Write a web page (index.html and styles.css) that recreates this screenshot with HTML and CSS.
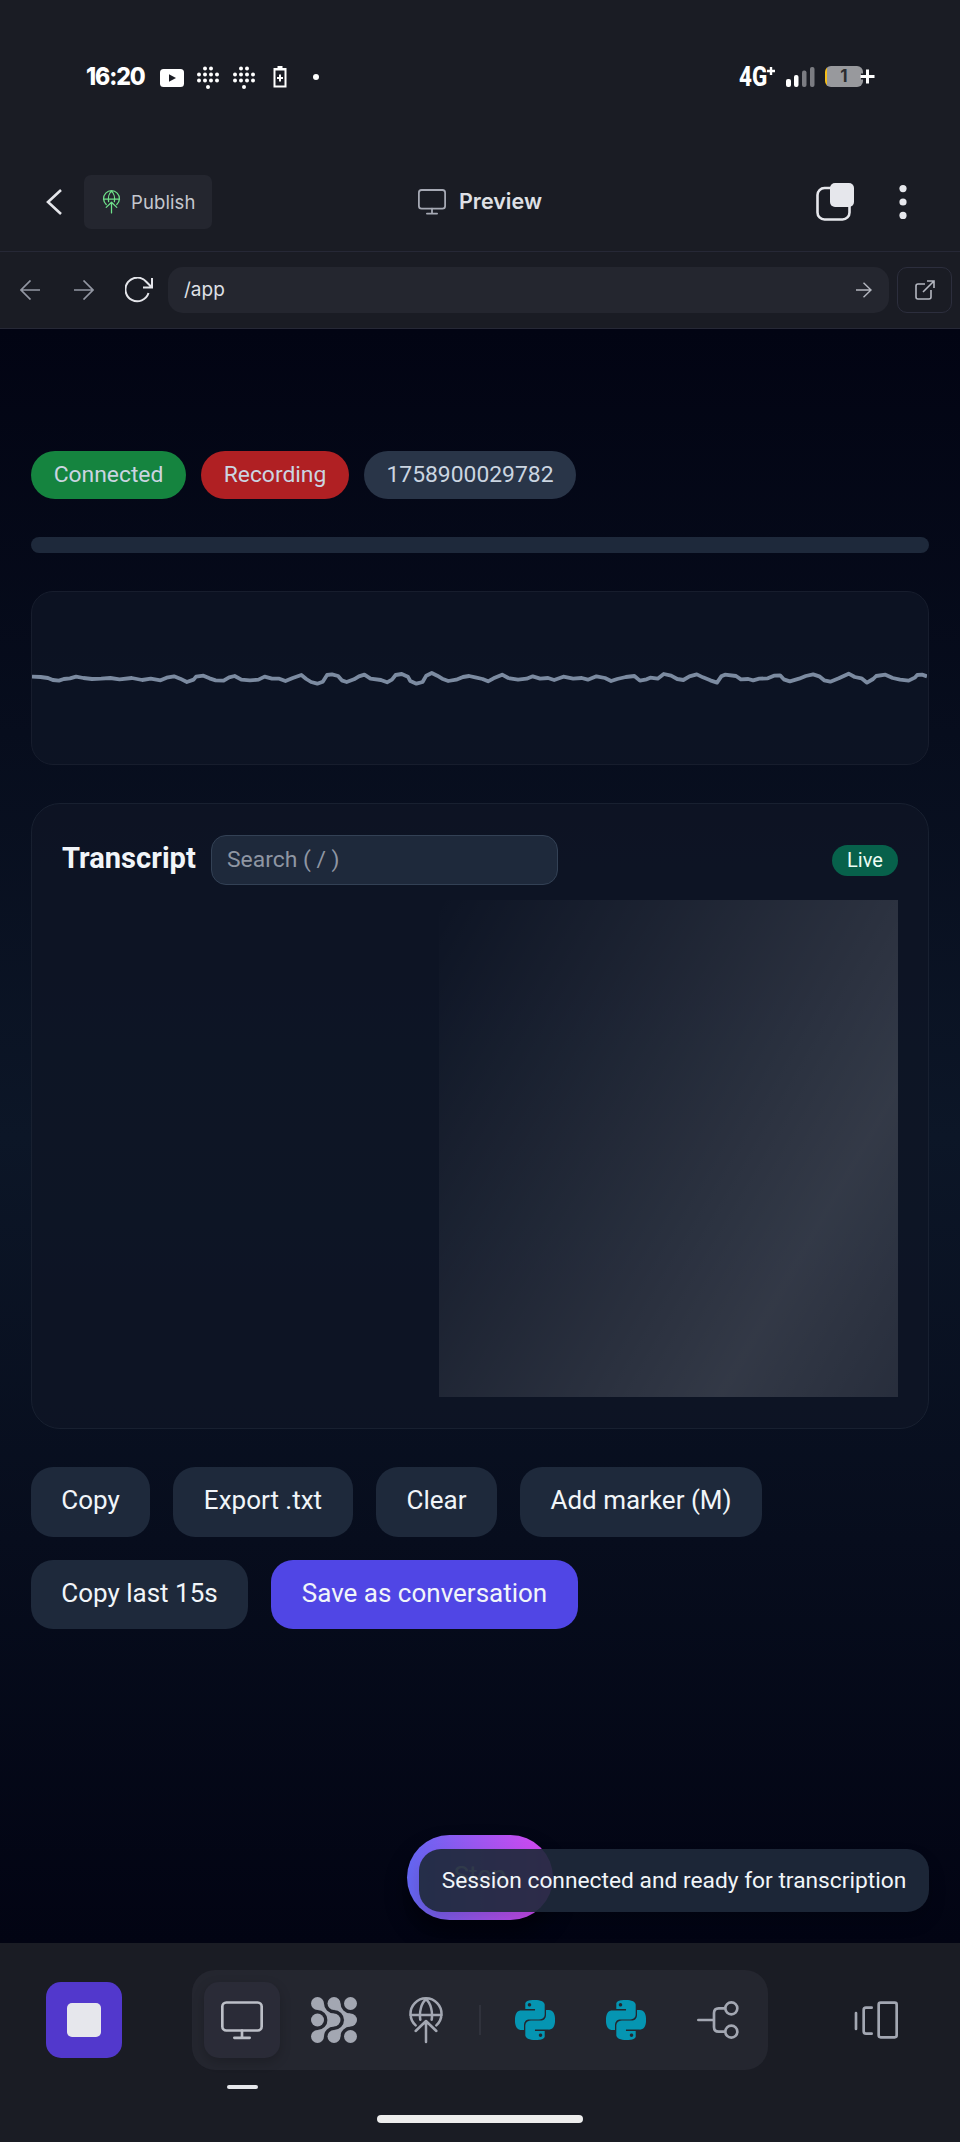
FILE: index.html
```html
<!DOCTYPE html>
<html lang="en">
<head>
<meta charset="utf-8">
<title>Preview</title>
<link rel="stylesheet" href="styles.css">
</head>
<body>
<svg class="defs" width="0" height="0" aria-hidden="true">
  <symbol id="python" viewBox="0 0 24 24"><path fill="currentColor" d="M14.25.18l.9.2.73.26.59.3.45.32.34.34.25.34.16.33.1.3.04.26.02.2-.01.13V8.5l-.05.63-.13.55-.21.46-.26.38-.3.31-.33.25-.35.19-.35.14-.33.1-.3.07-.26.04-.21.02H8.77l-.69.05-.59.14-.5.22-.41.27-.33.32-.27.35-.2.36-.15.37-.1.35-.07.32-.04.27-.02.21v3.06H3.17l-.21-.03-.28-.07-.32-.12-.35-.18-.36-.26-.36-.36-.35-.46-.32-.59-.28-.73-.21-.88-.14-1.05-.05-1.23.06-1.22.16-1.04.24-.87.32-.71.36-.57.4-.44.42-.33.42-.24.4-.16.36-.1.32-.05.24-.01h.16l.06.01h8.16v-.83H6.18l-.01-2.75-.02-.37.05-.34.11-.31.17-.28.25-.26.31-.23.38-.2.44-.18.51-.15.58-.12.64-.1.71-.06.77-.04.84-.02 1.27.05zm-6.3 1.98l-.23.33-.08.41.08.41.23.34.33.22.41.09.41-.09.33-.22.23-.34.08-.41-.08-.41-.23-.33-.33-.22-.41-.09-.41.09zm13.09 3.95l.28.06.32.12.35.18.36.27.36.35.35.47.32.59.28.73.21.88.14 1.04.05 1.23-.06 1.23-.16 1.04-.24.86-.32.71-.36.57-.4.45-.42.33-.42.24-.4.16-.36.09-.32.05-.24.02-.16-.01h-8.22v.82h5.84l.01 2.76.02.36-.05.34-.11.31-.17.29-.25.25-.31.24-.38.2-.44.17-.51.15-.58.13-.64.09-.71.07-.77.04-.84.01-1.27-.04-1.07-.14-.9-.2-.73-.25-.59-.3-.45-.33-.34-.34-.25-.34-.16-.33-.1-.3-.04-.25-.02-.2.01-.13v-5.34l.05-.64.13-.54.21-.46.26-.38.3-.32.33-.24.35-.2.35-.14.33-.1.3-.06.26-.04.21-.02.13-.01h5.84l.69-.05.59-.14.5-.21.41-.28.33-.32.27-.35.2-.36.15-.36.1-.35.07-.32.04-.28.02-.21V6.07h2.09l.14.01zm-6.47 14.25l-.23.33-.08.41.08.41.23.33.33.23.41.08.41-.08.33-.23.23-.33.08-.41-.08-.41-.23-.33-.33-.23-.41-.08-.41.08z"/></symbol>
  <symbol id="globe" viewBox="0 0 108 141"><g fill="none" stroke="currentColor" stroke-width="7.500" stroke-linecap="round" stroke-linejoin="round"><path d="M23 85A46.500 46.500 0 1 1 85 85M7 54H101M54 7C40 18 33 45 37 68M54 7C68 18 75 45 71 68M54 135V73M23 102L54 72L85 102"/></g></symbol>
  <symbol id="monitor" viewBox="0 0 126 116"><g fill="none" stroke="currentColor" stroke-width="8" stroke-linecap="round"><rect x="4" y="4" width="118" height="84" rx="12"/><path d="M63 88V109M40 110H86"/></g></symbol>
  <symbol id="dots" viewBox="0 0 24 24"><g fill="currentColor"><circle cx="9" cy="2.500" r="2"/><circle cx="15" cy="2.500" r="2"/><circle cx="3" cy="8.500" r="2"/><circle cx="9" cy="8.500" r="2"/><circle cx="15" cy="8.500" r="2"/><circle cx="21" cy="8.500" r="2"/><circle cx="3" cy="14.500" r="2"/><circle cx="9" cy="14.500" r="2"/><circle cx="15" cy="14.500" r="2"/><circle cx="21" cy="14.500" r="2"/><circle cx="12" cy="21" r="2"/></g></symbol>
</svg>

<div class="statusbar">
  <span class="clock">16:20</span>
  <svg class="st-yt" width="24" height="18" viewBox="0 0 24 18"><rect width="24" height="18" rx="3.500" fill="#fff"/><path d="M9 5.200L16 9L9 12.800Z" fill="#1a1c24"/></svg>
  <svg class="st-dots" width="24" height="24"><use href="#dots"/></svg>
  <svg class="st-dots" width="24" height="24"><use href="#dots"/></svg>
  <svg class="st-batt" width="14" height="22" viewBox="0 0 14 22"><path d="M4.500 0H9.500V2H13.500V21.500H.5V2H4.500Z" fill="#fff"/><path d="M2.500 4.500H11.500V19.500H2.500Z" fill="#1a1c24"/><path d="M7 8.500V15.500M4 12H10" stroke="#fff" stroke-width="2"/></svg>
  <span class="st-dot"></span>
  <span class="net">4G</span>
  <svg class="net-plus" width="8" height="8" viewBox="0 0 8 8"><path d="M4 0V8M0 4H8" stroke="#fff" stroke-width="2.400"/></svg>
  <svg class="signal" width="29" height="20" viewBox="0 0 29 20"><rect x="0" y="12" width="5" height="8" rx="2" fill="#fff"/><rect x="8" y="8" width="4.500" height="12" rx="2" fill="#fff"/><rect x="16" y="3.500" width="4.500" height="16.500" rx="2" fill="#7b7c82"/><rect x="24" y="0" width="4.500" height="20" rx="2" fill="#7b7c82"/></svg>
  <div class="battery"><span class="battery-num">1</span><svg class="battery-plus" width="17" height="17" viewBox="0 0 17 17"><path d="M8.500 2V15M2 8.500H15" stroke="#1a1c24" stroke-width="6"/><path d="M8.500 1.500V15.500M1.500 8.500H15.500" stroke="#fff" stroke-width="3"/></svg></div>
</div>

<header class="header">
  <div class="header-left">
    <svg width="17" height="28" viewBox="0 0 17 28"><path d="M15 2L2 14L15 26" fill="none" stroke="#e4e5ea" stroke-width="2.600"/></svg>
    <button class="publish"><svg width="19" height="24"><use href="#globe"/></svg><span>Publish</span></button>
  </div>
  <div class="title"><svg width="28" height="26"><use href="#monitor"/></svg><span>Preview</span></div>
  <div class="header-right">
    <svg width="38" height="38" viewBox="0 0 38 38"><rect x="1.500" y="5" width="32" height="31.500" rx="7" fill="none" stroke="#e6e7ec" stroke-width="2.600"/><rect x="14" y="0" width="24" height="24" rx="5" fill="#e6e7ec"/></svg>
    <svg width="8" height="36" viewBox="0 0 8 36"><g fill="#e6e7ec"><circle cx="4" cy="4.600" r="3.600"/><circle cx="4" cy="18" r="3.600"/><circle cx="4" cy="31.400" r="3.600"/></g></svg>
  </div>
</header>

<nav class="nav">
  <svg width="20" height="20" viewBox="0 0 20 20"><path d="M20 10H1M10.500 .5L1 10L10.500 19.500" fill="none" stroke="#9296a2" stroke-width="1.700"/></svg>
  <svg class="nav-fwd" width="20" height="20" viewBox="0 0 20 20"><path d="M0 10H19M9.500 .5L19 10L9.500 19.500" fill="none" stroke="#9296a2" stroke-width="1.700"/></svg>
  <svg class="nav-reload" width="29" height="26" viewBox="0 0 29 26"><path d="M23.500 16A11.800 11.800 0 1 1 21 4.500L27 10.500M27 1V10.500H18" fill="none" stroke="#e4e5ea" stroke-width="2"/></svg>
  <div class="url"><span>/app</span><svg width="16" height="16" viewBox="0 0 16 16"><path d="M0 8H15M7.500 .7L15 8L7.500 15.300" fill="none" stroke="#b4b7c0" stroke-width="1.400"/></svg></div>
  <div class="open"><svg width="20" height="20" viewBox="0 0 20 20"><path d="M10 4H3Q1 4 1 6V17Q1 19 3 19H14Q16 19 16 17V10M8 12L19 1M12 1H19V8" fill="none" stroke="#b4b7c0" stroke-width="1.600"/></svg></div>
</nav>

<main class="app">
  <div class="pills">
    <span class="pill pill-ok">Connected</span>
    <span class="pill pill-rec">Recording</span>
    <span class="pill pill-id">1758900029782</span>
  </div>
  <div class="meter"></div>
  <div class="wave">
    <svg width="895" height="30" viewBox="52 70 1462 90" preserveAspectRatio="none"><polyline fill="none" stroke="#7c8ba1" stroke-width="3.800" stroke-linejoin="round" vector-effect="non-scaling-stroke" points="52,108 66,109 78,112 86,118 96,120 104,115 114,113 124,108 136,112 150,115 165,114 180,112 195,116 215,112 232,118 246,114 262,119 272,111 284,107 294,114 305,124 316,117 320,108 332,105 342,113 352,119 365,120 374,110 383,106 394,117 408,119 422,117 432,108 444,114 456,114 466,121 478,112 492,103 500,115 508,124 518,129 527,123 534,103 542,101 552,106 558,119 566,124 578,116 586,107 595,102 605,114 622,118 632,125 640,117 646,103 656,100 666,108 670,121 680,129 690,124 696,105 705,97 714,105 722,114 732,121 745,117 756,109 766,106 778,111 788,115 797,122 806,113 820,102 830,112 846,117 860,114 870,107 882,114 895,112 905,118 920,108 936,114 950,112 960,117 974,107 988,112 998,121 1008,115 1022,109 1036,106 1045,120 1056,116 1062,111 1074,114 1084,100 1096,105 1106,115 1116,118 1126,107 1138,101 1148,110 1160,119 1171,126 1178,107 1184,102 1202,106 1210,116 1222,115 1230,119 1240,114 1254,113 1264,105 1274,104 1280,116 1290,122 1305,114 1316,106 1328,101 1338,107 1346,119 1356,123 1370,113 1378,106 1386,99 1396,109 1407,113 1416,126 1426,115 1431,106 1446,102 1458,112 1470,117 1484,120 1494,111 1498,103 1506,102 1514,107"/></svg>
  </div>
  <section class="transcript">
    <div class="tr-head"><h2>Transcript</h2><div class="search">Search ( / )</div><span class="live">Live</span></div>
    <div class="shade"></div>
  </section>
  <div class="actions">
    <button class="btn b-copy">Copy</button><button class="btn b-export">Export .txt</button><button class="btn b-clear">Clear</button><button class="btn b-marker">Add marker (M)</button>
    <button class="btn b-last">Copy last 15s</button><button class="btn b-save">Save as conversation</button>
  </div>
  <button class="stop">Stop</button>
  <div class="toast">Session connected and ready for transcription</div>
</main>

<footer class="footer">
  <div class="halt"><span></span></div>
  <div class="dock">
    <div class="tile tile-on"><svg width="42" height="39"><use href="#monitor"/></svg></div>
    <div class="tile"><svg width="46" height="46" viewBox="0 0 46 46"><g fill="currentColor"><circle cx="6.500" cy="6.500" r="6.500"/><circle cx="23" cy="6.500" r="6.500"/><circle cx="39.500" cy="6.500" r="6.500"/><circle cx="6.500" cy="23" r="6.500"/><circle cx="23" cy="23" r="6.500"/><circle cx="39.500" cy="23" r="6.500"/><circle cx="6.500" cy="39.500" r="6.500"/><circle cx="23" cy="39.500" r="6.500"/><circle cx="39.500" cy="39.500" r="6.500"/><path d="M13 6.500A10 10 0 0 0 23 16.500L16.500 23A10 10 0 0 0 6.500 13ZM29.500 6.500A10 10 0 0 0 39.500 16.500L33 23A10 10 0 0 0 23 13ZM13 39.500A10 10 0 0 1 23 29.500L16.500 23A10 10 0 0 1 6.500 33ZM29.500 39.500A10 10 0 0 1 39.500 29.500L33 23A10 10 0 0 1 23 33Z"/></g></svg></div>
    <div class="tile tile-globe"><svg width="36" height="47"><use href="#globe"/></svg></div>
    <div class="divider"></div>
    <div class="tile py"><svg width="40" height="40"><use href="#python"/></svg></div>
    <div class="tile py"><svg width="40" height="40"><use href="#python"/></svg></div>
    <div class="tile"><svg width="42" height="38" viewBox="0 0 126 114"><g fill="none" stroke="currentColor" stroke-width="8" stroke-linecap="round"><path d="M4 57H51M83 22H65Q51 22 51 36V78Q51 92 65 92H83"/><circle cx="103" cy="22" r="18"/><circle cx="103" cy="92" r="18"/></g></svg></div>
    <span class="indicator"></span>
  </div>
  <svg class="panels" width="44" height="38" viewBox="0 0 132 114"><g fill="none" stroke="currentColor" stroke-width="8" stroke-linecap="round"><path d="M6 36V84M53 20H36Q29 20 29 27V91Q29 98 36 98H53"/><rect x="74" y="5" width="54" height="104" rx="6"/></g></svg>
  <span class="homebar"></span>
</footer>
</body>
</html>
```
FILE: styles.css
```css
* { box-sizing: border-box; }
body {
  margin: 0;
  width: 960px;
  height: 2142px;
  overflow: hidden;
  display: flex;
  flex-direction: column;
  background: #1a1c24;
  font-family: Roboto, "Noto Sans", sans-serif;
  color: #f1f5f9;
}
svg { display: block; flex: none; }
button { border: 0; margin: 0; padding: 0; font: inherit; color: inherit; white-space: nowrap; }
.defs { position: absolute; }

/* phone status bar */
.statusbar {
  height: 153px;
  flex: none;
  display: flex;
  align-items: center;
  padding-left: 86px;
  color: #fff;
}
.clock { width: 61px; font: 800 24.500px/30px Inter, sans-serif; letter-spacing: -1.200px; white-space: nowrap; transform: scaleX(.94) translateY(-1px); transform-origin: left; }
.st-yt { margin: 2px 0 0 13px; }
.st-dots { margin: 2px 0 0 12px; }
.st-dots + .st-batt { margin: 1px 0 0 17px; }
.st-dot { width: 6px; height: 6px; margin: 0 0 0 26px; border-radius: 50%; background: #fff; }
.net { width: 34px; margin-left: 420px; font: 800 27px/30px Roboto, sans-serif; transform: scaleX(.83); transform-origin: left; letter-spacing: 0; }
.net-plus { margin: 0 0 11px -6px; }
.signal { margin-left: 11px; }
.battery { position: relative; width: 38px; height: 21px; margin: -1px 0 0 10px; border-radius: 6px; background: linear-gradient(90deg, #f5bd18 2px, #98999d 2px); }
.battery-num { display: block; text-align: center; color: #2b2c30; font: 700 17px/21px Inter, sans-serif; }
.battery-plus { position: absolute; left: 34px; top: 2px; }

/* app header */
.header {
  height: 99px;
  flex: none;
  display: grid;
  grid-template-columns: 1fr auto 1fr;
  align-items: center;
  padding: 0 53px 0 46px;
  border-bottom: 1px solid #262836;
}
.header-left { display: flex; align-items: center; gap: 21px; }
.publish {
  display: flex;
  align-items: center;
  gap: 10px;
  width: 128px;
  height: 54px;
  padding-left: 18px;
  border-radius: 7px;
  background: #24262f;
  color: #6fe08a;
}
.publish span { color: #c5c7ce; font: 400 18.500px/24px Inter, sans-serif; letter-spacing: .1px; }
.title { display: flex; align-items: center; gap: 13px; margin-left: 7px; color: #a6a9b4; }
.title span { color: #dfe0e5; font: 600 21.500px/26px Inter, sans-serif; width: 83px; letter-spacing: 0; margin-top: -2px; }
.header-right { display: flex; justify-content: flex-end; align-items: center; gap: 45px; }

.nav {
  height: 77px;
  flex: none;
  display: flex;
  align-items: center;
  padding: 0 8px 0 20px;
  border-bottom: 1px solid #262836;
}
.nav-fwd { margin-left: 34px; }
.nav-reload { margin-left: 31px; }
.url {
  width: 721px;
  height: 46px;
  margin-left: 14px;
  padding: 0 17px 0 16px;
  border-radius: 15px;
  background: #24262f;
  display: flex;
  align-items: center;
  justify-content: space-between;
  color: #dfe0e5;
  font: 400 19px/24px Inter, sans-serif;
}
.open { width: 55px; height: 46px; margin-left: 8px; border: 1px solid #2c2e3d; border-radius: 10px; display: grid; place-items: center; }

/* previewed page */
.app {
  position: relative;
  height: 1614px;
  flex: none;
  padding: 122px 31px 0;
  background: linear-gradient(180deg, #020413 0%, #0c1627 50%, #020413 100%);
}
.pills { display: flex; gap: 15px; }
.pill { height: 48px; border-radius: 24px; text-align: center; font-size: 22.860px; line-height: 48px; color: #cbd5e1; }
.pill-ok { width: 155px; background: #15843f; }
.pill-rec { width: 148px; background: #b02023; }
.pill-id { width: 212px; background: #293548; }
.meter { height: 16px; margin-top: 38px; border-radius: 8px; background: #1e293b; }
.wave {
  height: 174px;
  margin-top: 38px;
  padding: 72px 1px 0 0;
  border: 1px solid #171d2d;
  border-radius: 22px;
  background: rgba(15, 21, 38, .75);
}
.transcript {
  height: 626px;
  margin-top: 38px;
  padding: 31px 30px 0;
  border: 1px solid #182030;
  border-radius: 29px;
  background: rgba(15, 21, 38, .75);
}
.tr-head { display: flex; align-items: center; }
h2 { margin: 0; width: 149px; height: 50px; font: 700 29.100px/46px Roboto, sans-serif; }
.search { width: 347px; height: 50px; padding-left: 15px; border: 1px solid #334155; border-radius: 15px; background: #1e293b; color: #8f96a3; font-size: 22.860px; line-height: 48px; }
.live { width: 66px; height: 31px; margin: 1px 0 0 auto; border-radius: 15.500px; background: #07614b; text-align: center; font-size: 20px; line-height: 30px; color: #ecfdf5; }
.shade {
  width: 459px;
  height: 497px;
  margin: 15px 0 0 auto;
  background: linear-gradient(120deg, rgba(255, 255, 255, 0) 0%, rgba(255, 255, 255, .155) 76%, rgba(255, 255, 255, .11) 100%);
}
.actions { display: flex; flex-wrap: wrap; gap: 23px; margin-top: 38px; padding-right: 100px; }
.btn { height: 70px; padding-bottom: 4px; border-radius: 22px; background: #1e293b; font-size: 26px; line-height: 66px; }
.b-copy { width: 119px; }
.b-export { width: 180px; }
.b-clear { width: 121px; }
.b-marker { width: 242px; }
.b-last { width: 217px; height: 69px; }
.b-save { width: 307px; height: 69px; background: #5046e5; }
.stop {
  position: absolute;
  left: 407px;
  top: 1506px;
  width: 146px;
  height: 85px;
  padding-bottom: 6px;
  border-radius: 42.500px;
  background: linear-gradient(90deg, #6366f1, #d946ef);
  box-shadow: 0 14px 22px rgba(0, 0, 0, .4);
  color: #fff;
  font-size: 25.700px;
}
.toast {
  position: absolute;
  left: 419px;
  top: 1520px;
  width: 510px;
  height: 63px;
  border-radius: 22px;
  background: rgba(30, 41, 59, .92);
  text-align: center;
  font-size: 22.780px;
  line-height: 64px;
  white-space: nowrap;
  box-shadow: 0 10px 18px rgba(0, 0, 0, .15);
}

/* bottom bar */
.footer {
  position: relative;
  height: 199px;
  flex: none;
  display: flex;
  align-items: flex-start;
  padding: 27px 62px 0 46px;
  background: #1a1c24;
  color: #a3a7b2;
}
.halt { width: 76px; height: 76px; margin-top: 12px; border-radius: 15px; background: #5238cc; display: grid; place-items: center; }
.halt span { width: 34px; height: 34px; border-radius: 5px; background: #e6e7ec; }
.dock {
  position: relative;
  width: 576px;
  height: 100px;
  margin-left: 70px;
  padding: 0 12px;
  border-radius: 23px;
  background: #24262f;
  display: flex;
  align-items: center;
  justify-content: space-between;
}
.tile { width: 76px; height: 76px; border-radius: 15px; display: grid; place-items: center; }
.tile-on { background: #2a2b37; color: #bcbfc7; box-shadow: 0 4px 12px rgba(0, 0, 0, .2); }
.tile-globe { padding-left: 2px; }
.py { color: #0595b2; }
.divider { width: 2px; height: 30px; background: #30323c; }
.indicator { position: absolute; left: 35px; top: 115px; width: 31px; height: 4px; border-radius: 2px; background: #e6e7ec; }
.panels { margin: 31px 0 0 auto; }
.homebar { position: absolute; left: 377px; top: 172px; width: 206px; height: 8px; border-radius: 4px; background: #ededed; }
```
